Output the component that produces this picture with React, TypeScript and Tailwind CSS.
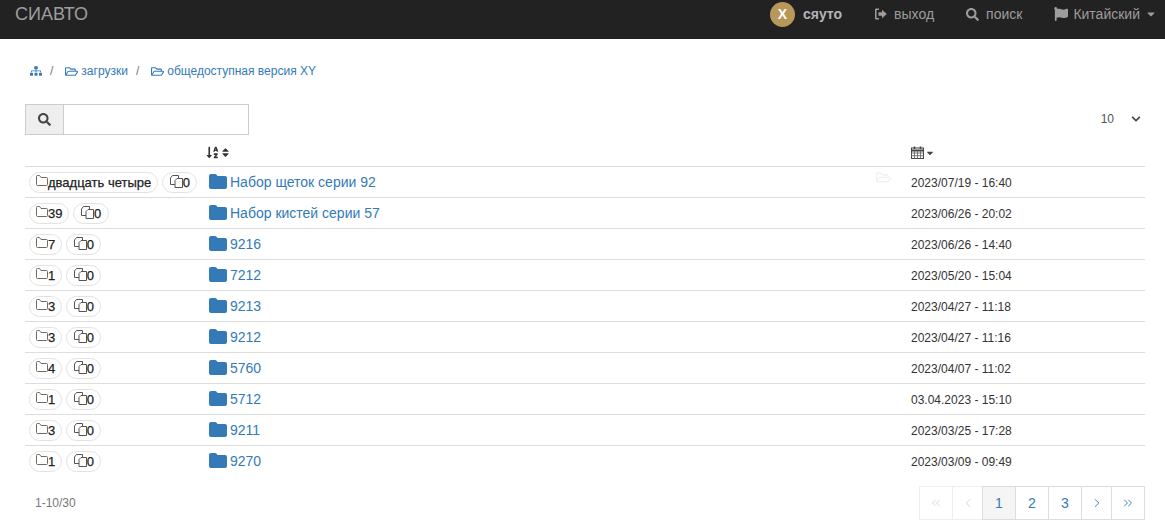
import React from "react";
import { FaSitemap, FaRegFolderOpen, FaSearch, FaSortAlphaDown, FaSort, FaFlag, FaCaretDown, FaChevronDown } from "react-icons/fa";
import { ChevronsLeft, ChevronLeft, ChevronRight, ChevronsRight } from "lucide-react";

const rows = [
  ["двадцать четыре", "Набор щеток серии 92", "2023/07/19 - 16:40"],
  ["39", "Набор кистей серии 57", "2023/06/26 - 20:02"],
  ["7", "9216", "2023/06/26 - 14:40"],
  ["1", "7212", "2023/05/20 - 15:04"],
  ["3", "9213", "2023/04/27 - 11:18"],
  ["3", "9212", "2023/04/27 - 11:16"],
  ["4", "5760", "2023/04/07 - 11:02"],
  ["1", "5712", "03.04.2023 - 15:10"],
  ["3", "9211", "2023/03/25 - 17:28"],
  ["1", "9270", "2023/03/09 - 09:49"],
];

function ThinFolder() {
  return (
    <svg width="12" height="11" viewBox="0 0 12 11" fill="none" stroke="#6f6a60" strokeWidth="1" className="shrink-0 -mt-[4px]">
      <path d="M0.5 9.5 V1.5 Q0.5 0.5 1.5 0.5 H3.5 L5 2.5 H10.5 Q11.5 2.5 11.5 3.5 V9.5 Q11.5 10.5 10.5 10.5 H1.5 Q0.5 10.5 0.5 9.5 Z" />
    </svg>
  );
}

function Sheets() {
  return (
    <svg width="13" height="13" viewBox="0 0 13 13" fill="white" stroke="#555" strokeWidth="1" className="shrink-0 -mt-[3px]">
      <path d="M0.5 9.5 V3 L2.5 0.5 H8.5 V9.5 Z" />
      <path d="M5 12.5 V5.5 L7 3.5 H12.5 V12.5 Z" />
    </svg>
  );
}

function BlueFolder() {
  return (
    <svg width="18" height="15" viewBox="0 0 18 15" fill="#337ab7" className="shrink-0 mr-[3px] -mt-[2px]">
      <path d="M0 2 Q0 0 2 0 H6 Q7 0 7.6 0.8 L8.6 2 H16 Q18 2 18 4 V13 Q18 15 16 15 H2 Q0 15 0 13 Z" />
    </svg>
  );
}

function LogOut() {
  return (
    <svg width="13" height="12" viewBox="0 0 13 12" className="mr-[7px]" fill="#9d9d9d">
      <path d="M1 1.5 Q1 0.5 2 0.5 H5 V2 H2.5 V10 H5 V11.5 H2 Q1 11.5 1 10.5 Z" />
      <path d="M4.5 4.2 H8 V1.8 L12.8 6 L8 10.2 V7.8 H4.5 Z" />
    </svg>
  );
}

function Calendar() {
  return (
    <svg width="13" height="13" viewBox="0 0 13 13" fill="none" stroke="#444" strokeWidth="1">
      <rect x="0.5" y="2" width="12" height="10.5" fill="white" />
      <path d="M0.5 4.5 H12.5" strokeWidth="2" />
      <path d="M0.5 7 H12.5 M0.5 9.7 H12.5 M3.5 5 V12.5 M6.5 5 V12.5 M9.5 5 V12.5" stroke="#777" />
      <path d="M3.5 0.5 V3 M9.5 0.5 V3" strokeWidth="1.6" />
    </svg>
  );
}

function Pill({ children }: { children: React.ReactNode }) {
  return (
    <span className="inline-flex items-center h-[21px] px-[6px] border border-[#e2e2e2] rounded-full text-[13px] leading-none text-[#222] [-webkit-text-stroke:0.25px_#222] bg-white whitespace-nowrap">
      {children}
    </span>
  );
}

function Page({ w, children, active, muted }: { w: string; children: React.ReactNode; active?: boolean; muted?: boolean }) {
  return (
    <span className={`${w} h-[34px] flex items-center justify-center border -ml-px first:ml-0 text-[14px] ${active ? "bg-[#f5f5f5]" : "bg-white"} ${muted ? "text-[#c5d6e6] border-[#eee]" : "text-[#337ab7] border-[#ddd]"}`}>
      {children}
    </span>
  );
}

export default function App() {
  return (
    <div className="w-[1165px] h-[529px] overflow-hidden bg-white font-['Liberation_Sans',Arial,sans-serif]">
      <header className="h-[39px] bg-[#222] flex items-start pl-[15px] text-[#9d9d9d]">
        <span className="text-[18px] leading-[28px]">СИАВТО</span>
        <nav className="ml-auto flex items-center h-[28px] text-[14px] pr-[8px]">
          <span className="w-[25px] h-[25px] rounded-full bg-[#b8975a] text-white flex items-center justify-center text-[14px] font-bold">X</span>
          <span className="ml-[8px] font-bold text-[#b5b5b5]">сяуто</span>
          <span className="ml-[32px] flex items-center">
            <LogOut />выход
          </span>
          <span className="ml-[32px] flex items-center">
            <FaSearch size={13} className="mr-[7px]" />поиск
          </span>
          <span className="ml-[32px] flex items-center">
            <FaFlag size={14} className="mr-[5px]" />Китайский
            <FaCaretDown size={12} className="ml-[5px]" />
          </span>
        </nav>
      </header>

      <main className="pl-[25px] pr-[20px]">
        <div className="h-[65px] pt-[25px] pl-[5px] flex items-start text-[12px] leading-[14px] text-[#337ab7]">
          <FaSitemap size={12} className="mt-[1px]" />
          <span className="mx-[8px] text-[#777]">/</span>
          <span className="ml-[4px] flex items-center"><FaRegFolderOpen size={13} className="mr-[3px]" />загрузки</span>
          <span className="ml-[8px] mr-[8px] text-[#777]">/</span>
          <span className="ml-[4px] flex items-center"><FaRegFolderOpen size={13} className="mr-[3px]" />общедоступная версия XY</span>
        </div>

        <div className="flex items-center justify-between h-[31px]">
          <div className="flex w-[224px] h-[31px] border border-[#ccc]">
            <span className="w-[38px] bg-[#eee] border-r border-[#ccc] flex items-center justify-center text-[#444]">
              <FaSearch size={13} />
            </span>
            <input className="flex-1 min-w-0 outline-none bg-white" />
          </div>
          <div className="flex items-center text-[12px] text-[#555] -mt-[2px]">
            10
            <FaChevronDown size={10} className="ml-[17px] mr-[4px] text-[#444]" />
          </div>
        </div>

        <table className="w-[1120px] table-fixed border-collapse">
          <colgroup>
            <col className="w-[179px]" />
            <col className="w-[702px]" />
            <col />
          </colgroup>
          <thead>
            <tr className="h-[31px] border-b border-[#ddd]">
              <th />
              <th className="text-left pl-[2px] pt-[8px] align-middle font-normal leading-none">
                <span className="inline-flex items-center text-[#333]">
                  <FaSortAlphaDown size={13} />
                  <FaSort size={11} className="ml-[1px]" />
                </span>
              </th>
              <th className="text-left pl-[5px] pt-[8px] align-middle font-normal leading-none">
                <span className="inline-flex items-center text-[#444]">
                  <Calendar />
                  <FaCaretDown size={10} className="ml-[1px]" />
                </span>
              </th>
            </tr>
          </thead>
          <tbody>
            {rows.map((r, i) => (
              <tr key={i} className={`h-[31px] ${i < rows.length - 1 ? "border-b border-[#ddd]" : ""}`}>
                <td className="pl-[4px] pt-[2px]">
                  <span className="flex items-center gap-[4px]">
                    <Pill><ThinFolder />{r[0]}</Pill>
                    <Pill><span className="px-[0.5px] inline-flex items-center"><Sheets />0</span></Pill>
                  </span>
                </td>
                <td className="pl-[5px] pt-[2px]">
                  <span className="flex items-center text-[14px] text-[#337ab7] relative">
                    <BlueFolder />
                    {r[1]}
                    {i === 0 && <FaRegFolderOpen size={15} className="absolute left-[667px] top-[-2px] text-[#f0f0f0]" />}
                  </span>
                </td>
                <td className="pl-[5px] pt-[2px] text-[12px] text-[#333]">{r[2]}</td>
              </tr>
            ))}
          </tbody>
        </table>

        <div className="flex items-start justify-between pt-[10px] w-[1120px]">
          <span className="pl-[10px] pt-[10px] text-[12px] leading-[14px] text-[#777]">1-10/30</span>
          <div className="flex">
            <Page w="w-[34px]" muted><ChevronsLeft size={14} strokeWidth={1.6} /></Page>
            <Page w="w-[31px]" muted><ChevronLeft size={14} strokeWidth={1.6} /></Page>
            <Page w="w-[34px]" active>1</Page>
            <Page w="w-[34px]">2</Page>
            <Page w="w-[34px]">3</Page>
            <Page w="w-[31px]"><ChevronRight size={14} strokeWidth={1.6} /></Page>
            <Page w="w-[34px]"><ChevronsRight size={14} strokeWidth={1.6} /></Page>
          </div>
        </div>
      </main>
    </div>
  );
}
